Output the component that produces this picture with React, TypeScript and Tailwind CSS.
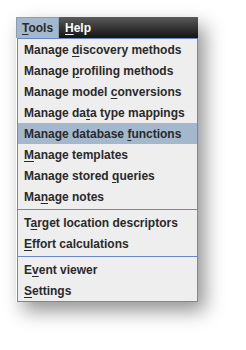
type Item = { pre: string; key: string; post: string; selected?: boolean };

const groups: Item[][] = [
  [
    { pre: "Manage ", key: "d", post: "iscovery methods" },
    { pre: "Manage ", key: "p", post: "rofiling methods" },
    { pre: "Manage model ", key: "c", post: "onversions" },
    { pre: "Manage da", key: "t", post: "a type mappings" },
    { pre: "Manage database ", key: "f", post: "unctions", selected: true },
    { pre: "", key: "M", post: "anage templates" },
    { pre: "Manage stored ", key: "q", post: "ueries" },
    { pre: "Ma", key: "n", post: "age notes" },
  ],
  [
    { pre: "T", key: "a", post: "rget location descriptors" },
    { pre: "", key: "E", post: "ffort calculations" },
  ],
  [
    { pre: "E", key: "v", post: "ent viewer" },
    { pre: "", key: "S", post: "ettings" },
  ],
];

const MenuRow = ({ item }: { item: Item }) => (
  <div
    className={`h-[21px] flex items-center pl-[6px] whitespace-pre ${
      item.selected ? "bg-[#a3b8cc]" : ""
    }`}
  >
    <span>
      {item.pre}
      <span className="underline underline-offset-2">{item.key}</span>
      {item.post}
    </span>
  </div>
);

export default function App() {
  return (
    <div
      className="min-h-screen bg-white pt-[17px] pl-[16px] text-[12px] font-bold text-[#2a2a2a]"
      style={{ fontFamily: '"Liberation Sans", Arial, sans-serif' }}
    >
      <div className="w-[182px] shadow-[7px_9px_18px_rgba(0,0,0,0.42)]">
        <div className="flex h-[21px]">
          <div className="w-[43px] bg-[#a3b8cc] border border-[#8c9db0] border-b-0 flex items-center pl-[5px]">
            <span>
              <span className="underline underline-offset-2">T</span>ools
            </span>
          </div>
          <div className="flex-1 bg-gradient-to-b from-[#5c5c5c] to-[#141414] text-white flex items-center pl-[6px]">
            <span>
              <span className="underline underline-offset-2">H</span>elp
            </span>
          </div>
        </div>
        <div className="ml-[1px] border border-[#6c86c6] bg-[#eeeeee]">
          {groups.map((g, gi) => (
            <div key={gi}>
              {gi > 0 && (
                <div className="h-[5px] pt-[2px]">
                  <div className="h-px bg-[#6c86c6]" />
                </div>
              )}
              {g.map((item, i) => (
                <MenuRow key={i} item={item} />
              ))}
            </div>
          ))}
        </div>
      </div>
    </div>
  );
}
